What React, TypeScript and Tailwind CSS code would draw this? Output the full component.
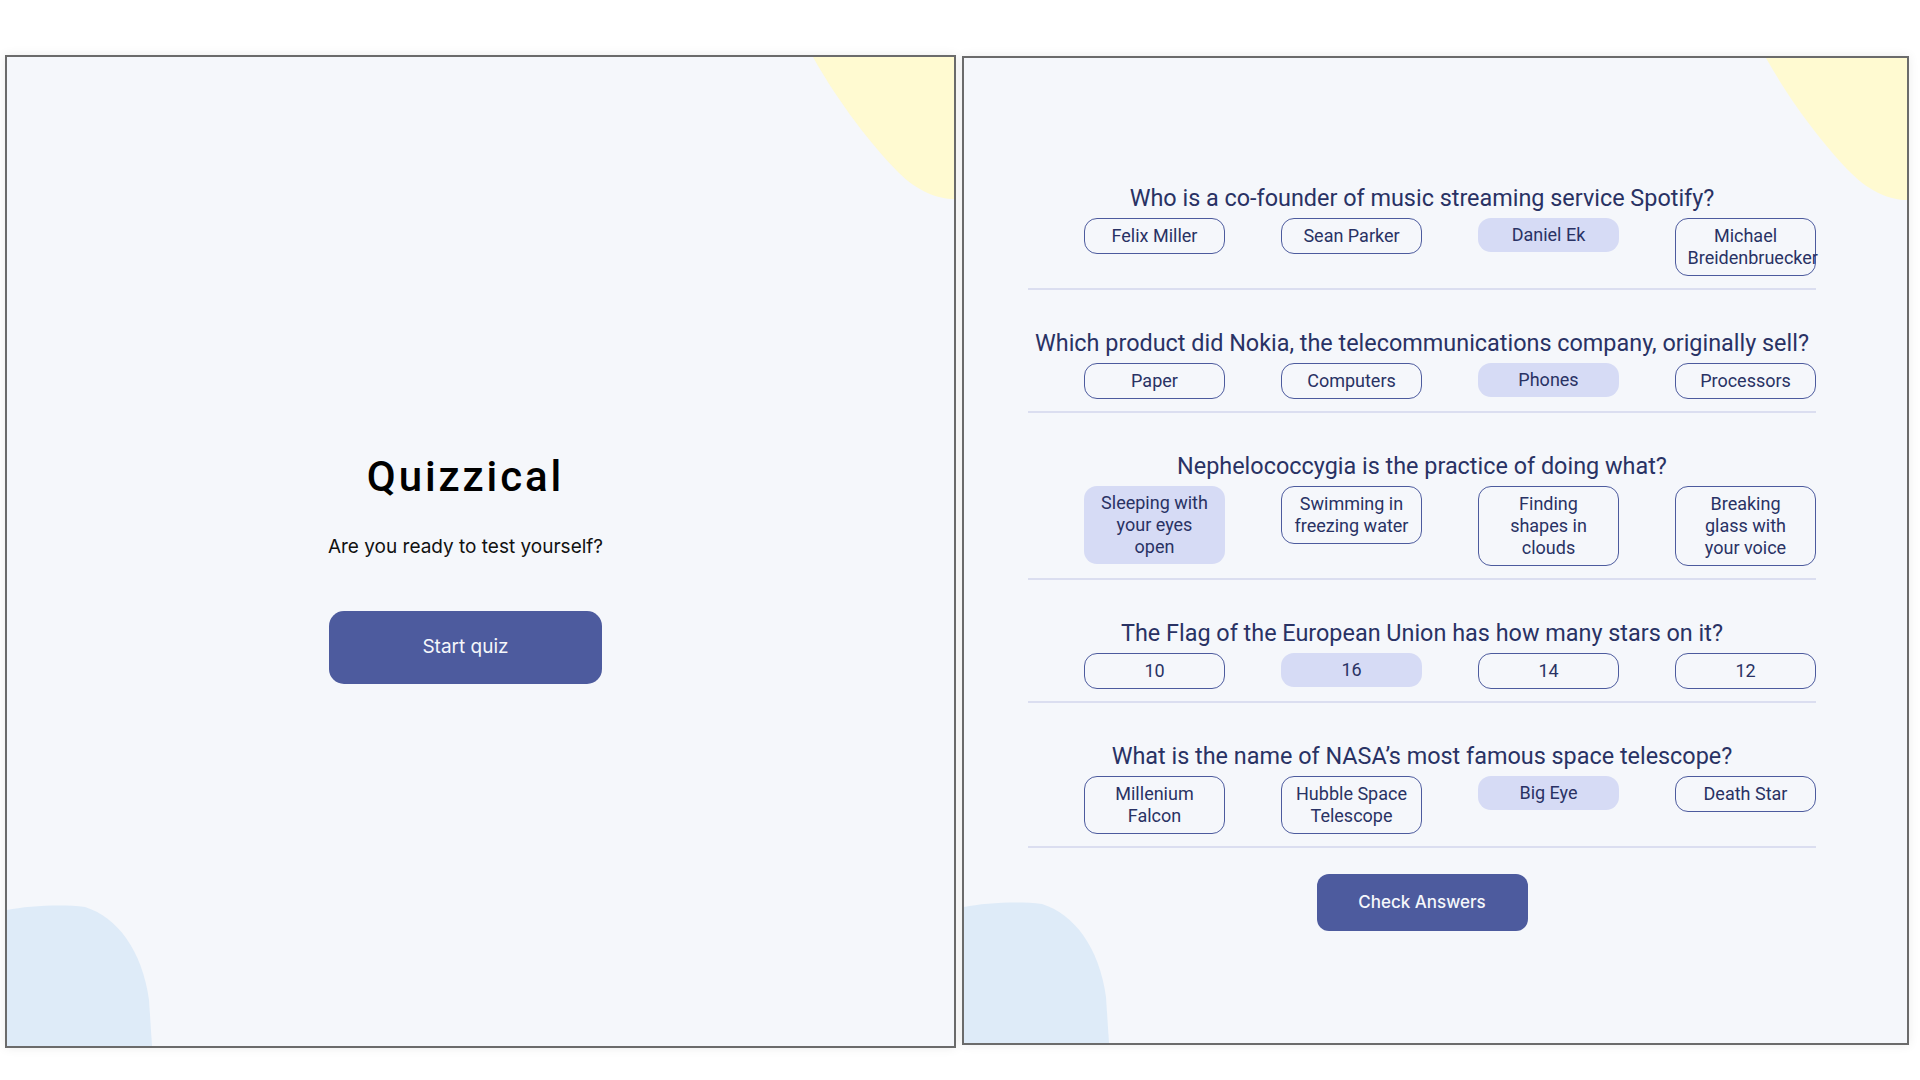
import React from "react";

type Question = {
  question: string;
  answers: string[];
  selected: number;
};

const questions: Question[] = [
  {
    question: "Who is a co-founder of music streaming service Spotify?",
    answers: ["Felix Miller", "Sean Parker", "Daniel Ek", "Michael Breidenbruecker"],
    selected: 2,
  },
  {
    question:
      "Which product did Nokia, the telecommunications company, originally sell?",
    answers: ["Paper", "Computers", "Phones", "Processors"],
    selected: 2,
  },
  {
    question: "Nephelococcygia is the practice of doing what?",
    answers: [
      "Sleeping with your eyes open",
      "Swimming in freezing water",
      "Finding shapes in clouds",
      "Breaking glass with your voice",
    ],
    selected: 0,
  },
  {
    question: "The Flag of the European Union has how many stars on it?",
    answers: ["10", "16", "14", "12"],
    selected: 1,
  },
  {
    question: "What is the name of NASA\u2019s most famous space telescope?",
    answers: ["Millenium Falcon", "Hubble Space Telescope", "Big Eye", "Death Star"],
    selected: 2,
  },
];

function YellowBlob() {
  return (
    <svg
      className="absolute top-0 right-0 w-[141px] h-[142px]"
      viewBox="0 0 141 142"
    >
      <path
        d="M0 0H141V142C125 142 105 135 85 115C60 90 25 45 0 0Z"
        fill="#FFFAD1"
      />
    </svg>
  );
}

function BlueBlob() {
  return (
    <svg
      className="absolute bottom-0 left-0 w-[145px] h-[141px]"
      viewBox="0 0 145 141"
    >
      <path
        d="M0 5C20 1 55 -1 78 2C110 12 135 45 142 95L145 141H0Z"
        fill="#DEEBF8"
      />
    </svg>
  );
}

function StartScreen() {
  return (
    <div className="relative overflow-hidden w-[951px] h-[993px] bg-[#F5F7FB] border-2 border-[#6b6b6b] shadow-[0_0_10px_rgba(0,0,0,0.08)] flex flex-col items-center pr-[30px] pt-[396px]">
      <YellowBlob />
      <BlueBlob />
      <h1
        className="relative text-[42px] leading-[48px] font-medium tracking-[2.9px] text-black"
        style={{ fontFamily: "Roboto, sans-serif" }}
      >
        Quizzical
      </h1>
      <p
        className="relative mt-[34px] text-[19px] leading-[24px] text-[#111]"
        style={{ fontFamily: "Inter, sans-serif" }}
      >
        Are you ready to test yourself?
      </p>
      <button
        className="relative mt-[52px] w-[273px] h-[73px] rounded-[15px] bg-[#4D5B9E] text-[#F5F7FB] text-[19px]"
        style={{ fontFamily: "Inter, sans-serif" }}
      >
        Start quiz
      </button>
    </div>
  );
}

function QuizScreen() {
  return (
    <div className="relative overflow-hidden mt-[1px] w-[947px] h-[989px] bg-[#F5F7FB] border-2 border-[#6b6b6b] shadow-[0_0_10px_rgba(0,0,0,0.08)] pl-[64px] pt-[130px]">
      <YellowBlob />
      <BlueBlob />
      <div
        className="relative w-[788px] flex flex-col gap-[43px]"
        style={{ fontFamily: "Roboto, sans-serif" }}
      >
        {questions.map((item) => (
          <div
            key={item.question}
            className="pb-3 border-b-2 border-[#DBDEF0]"
          >
            <h2 className="text-center text-[23.4px] leading-[20px] text-[#293264] mb-[10px]">
              {item.question}
            </h2>
            <div className="grid grid-cols-4 items-start justify-items-end">
              {item.answers.map((answer, i) => (
                <button
                  key={answer}
                  className={
                    i === item.selected
                      ? "w-[141px] px-[11.5px] py-[6px] rounded-[13px] bg-[#D6DBF5] text-[#293264] text-[18px] leading-[22px] text-center"
                      : "w-[141px] px-[11.5px] py-[6px] rounded-[13px] border border-[#4D5B9E] text-[#293264] text-[18px] leading-[22px] text-center"
                  }
                >
                  {answer}
                </button>
              ))}
            </div>
          </div>
        ))}
      </div>
      <div className="relative w-[788px] flex justify-center mt-[26px]">
        <button
          className="w-[211px] h-[57px] rounded-[12px] bg-[#4D5B9E] text-[#F5F7FB] text-[17px] font-medium"
          style={{ fontFamily: "Inter, sans-serif" }}
        >
          Check Answers
        </button>
      </div>
    </div>
  );
}

export default function App() {
  return (
    <div className="w-[1920px] h-[1080px] bg-white flex items-start gap-[6px] pl-[5px] pt-[55px]">
      <StartScreen />
      <QuizScreen />
    </div>
  );
}
